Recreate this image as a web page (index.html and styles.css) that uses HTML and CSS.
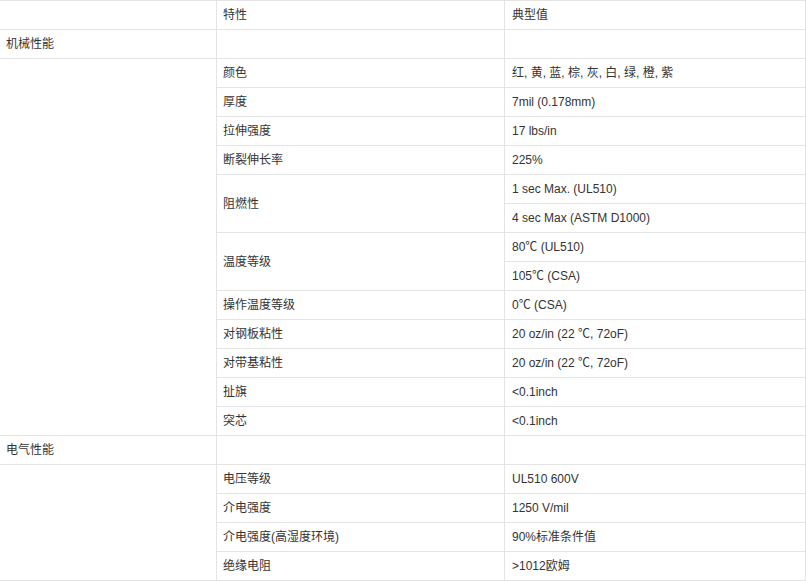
FILE: index.html
```html
<!DOCTYPE html>
<html lang="zh">
<head>
<meta charset="utf-8">
<title>特性</title>
<link rel="stylesheet" href="styles.css">
</head>
<body>
<table class="spec">
  <colgroup>
    <col class="c1">
    <col class="c2">
    <col class="c3">
  </colgroup>
  <tbody>
    <tr><td></td><td>特性</td><td class="v">典型值</td></tr>
    <tr><td>机械性能</td><td></td><td class="v"></td></tr>
    <tr><td rowspan="13"></td><td>颜色</td><td class="v">红, 黄, 蓝, 棕, 灰, 白, 绿, 橙, 紫</td></tr>
    <tr><td>厚度</td><td class="v">7mil (0.178mm)</td></tr>
    <tr><td>拉伸强度</td><td class="v">17 lbs/in</td></tr>
    <tr><td>断裂伸长率</td><td class="v">225%</td></tr>
    <tr><td rowspan="2">阻燃性</td><td class="v">1 sec Max. (UL510)</td></tr>
    <tr><td class="v">4 sec Max (ASTM D1000)</td></tr>
    <tr><td rowspan="2">温度等级</td><td class="v">80℃ (UL510)</td></tr>
    <tr><td class="v">105℃ (CSA)</td></tr>
    <tr><td>操作温度等级</td><td class="v">0℃ (CSA)</td></tr>
    <tr><td>对钢板粘性</td><td class="v">20 oz/in (22 ℃, 72oF)</td></tr>
    <tr><td>对带基粘性</td><td class="v">20 oz/in (22 ℃, 72oF)</td></tr>
    <tr><td>扯旗</td><td class="v">&lt;0.1inch</td></tr>
    <tr><td>突芯</td><td class="v">&lt;0.1inch</td></tr>
    <tr><td>电气性能</td><td></td><td class="v"></td></tr>
    <tr><td rowspan="4"></td><td>电压等级</td><td class="v">UL510 600V</td></tr>
    <tr><td>介电强度</td><td class="v">1250 V/mil</td></tr>
    <tr><td>介电强度(高湿度环境)</td><td class="v">90%标准条件值</td></tr>
    <tr><td>绝缘电阻</td><td class="v">&gt;1012欧姆</td></tr>
  </tbody>
</table>
</body>
</html>
```

FILE: styles.css
```css
html, body {
  margin: 0;
  padding: 0;
  background: #ffffff;
}

.spec {
  border-collapse: separate;
  border-spacing: 0;
  table-layout: fixed;
  width: 806px;
  border-top: 1px solid #e4e4e4;
  font-family: "Liberation Sans", Arial, "Noto Sans CJK SC", sans-serif;
  font-size: 12px;
  color: #333333;
}

.c1 { width: 217px; }
.c2 { width: 288px; }
.c3 { width: 301px; }

.spec td {
  height: 28px;
  padding: 0 6px;
  border-right: 1px solid #e4e4e4;
  border-bottom: 1px solid #e4e4e4;
  vertical-align: middle;
  line-height: 18px;
  white-space: nowrap;
}

.spec td.v {
  padding-left: 7px;
}
```
